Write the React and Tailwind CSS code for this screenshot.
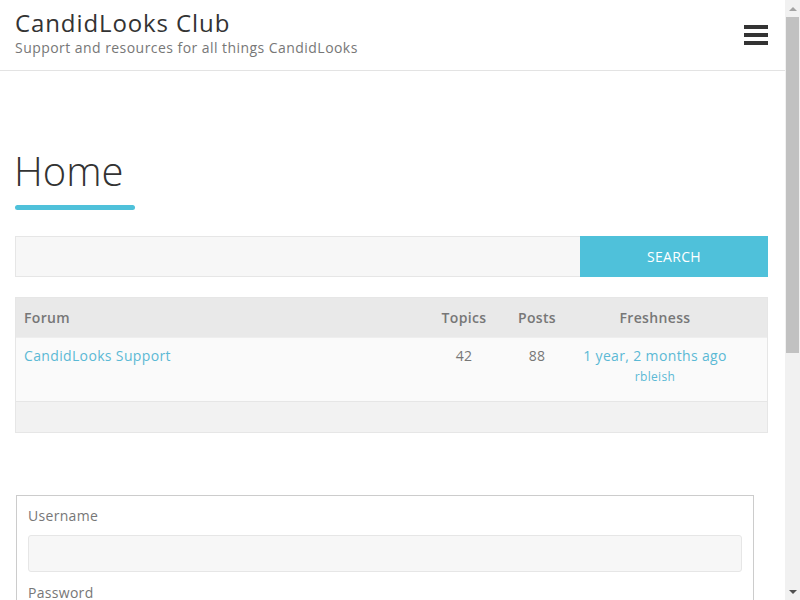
import { useState } from 'react';

const font = { fontFamily: '"Open Sans", "Liberation Sans", sans-serif' };

function Header() {
  return (
    <header className="flex items-start justify-between border-b border-[#e3e3e3] h-[71px] pl-[15px] pr-[17px]">
      <div className="pt-[7px]">
        <h1 className="text-[24px] leading-[32px] text-[#333] tracking-[0.9px]">CandidLooks Club</h1>
        <p className="text-[14px] leading-[20px] text-[#777] mt-[-1px] tracking-[0.45px]">Support and resources for all things CandidLooks</p>
      </div>
      <button className="mt-[25px] flex flex-col gap-[4px] w-[24px]" aria-label="Menu">
        <span className="block h-[4px] w-full bg-[#333]" />
        <span className="block h-[4px] w-full bg-[#333]" />
        <span className="block h-[4px] w-full bg-[#333]" />
      </button>
    </header>
  );
}

function ForumTable() {
  return (
    <div className="border border-[#e6e6e6] text-[14px] tracking-[0.35px]">
      {/* head */}
      <div className="flex items-center h-[39px] bg-[#e9e9e9] text-[#777] font-semibold">
        <div className="flex-1 pl-[8px]">Forum</div>
        <div className="w-[74px] text-center">Topics</div>
        <div className="w-[72px] text-center">Posts</div>
        <div className="w-[164px] text-center">Freshness</div>
        <div className="w-[30px]" />
      </div>
      {/* row */}
      <div className="flex items-start h-[64px] bg-[#fafafa] border-t border-[#eee] pt-[7px]">
        <div className="flex-1 pl-[8px]">
          <a href="#" className="text-[#5ab9d5]">CandidLooks Support</a>
        </div>
        <div className="w-[74px] text-center text-[#777]">42</div>
        <div className="w-[72px] text-center text-[#777]">88</div>
        <div className="w-[164px] text-center">
          <a href="#" className="block text-[#5ab9d5]">1 year, 2 months ago</a>
          <a href="#" className="block text-[12px] leading-[18px] mt-[2px] text-[#5ab9d5]">rbleish</a>
        </div>
        <div className="w-[30px]" />
      </div>
      {/* foot */}
      <div className="h-[31px] bg-[#f2f2f2] border-t border-[#e6e6e6]" />
    </div>
  );
}

function LoginBox() {
  const [remember, setRemember] = useState(false);
  return (
    <form className="ml-[1px] mr-[14px] border border-[#ccc] px-[11px] pt-[12px] pb-[20px] text-[14px] text-[#777] tracking-[0.3px]">
      <label className="block leading-[16px]">Username</label>
      <input className="block w-full h-[37px] mt-[11px] bg-[#f7f7f7] border border-[#e6e6e6] rounded-[3px]" />
      <label className="block leading-[16px] mt-[13px]">Password</label>
      <input type="password" className="block w-full h-[37px] mt-[11px] bg-[#f7f7f7] border border-[#e6e6e6] rounded-[3px]" />
      <label className="flex items-center gap-[8px] mt-[14px]">
        <input type="checkbox" checked={remember} onChange={() => setRemember(!remember)} />
        Keep me signed in
      </label>
      <button type="button" className="mt-[14px] h-[40px] px-[24px] bg-[#4fc1da] text-white uppercase">Log In</button>
    </form>
  );
}

// browser scrollbar as it shows in the screenshot
function Scrollbar() {
  return (
    <div className="w-[15px] shrink-0 h-full flex flex-col bg-[#f1f1f1]">
      <div className="h-[17px] flex items-center justify-center">
        <div className="w-0 h-0 border-x-[4px] border-x-transparent border-b-[4px] border-b-[#a3a3a3]" />
      </div>
      <div className="h-[336px] mx-[1px] bg-[#c1c1c1]" />
      <div className="flex-1" />
      <div className="h-[17px] flex items-center justify-center">
        <div className="w-0 h-0 border-x-[4px] border-x-transparent border-t-[4px] border-t-[#505050]" />
      </div>
    </div>
  );
}

export default function App() {
  return (
    <div className="h-screen flex overflow-hidden bg-white" style={font}>
      <div className="flex-1 min-w-0 overflow-y-auto">
        <div className="min-h-[1010px]">
          <Header />
          <main className="pl-[15px] pr-[17px] pt-[80px] pb-[80px]">
            <h2 className="text-[40px] leading-[40px] font-light text-[#333] ml-[-1px]">Home</h2>
            <div className="mt-[14px] h-[5px] w-[120px] rounded-full bg-[#4fc1da]" />

            <form className="flex mt-[26px]">
              <input className="flex-1 h-[41px] bg-[#f7f7f7] border border-[#e6e6e6] border-r-0" />
              <button type="button" className="w-[188px] h-[41px] bg-[#4fc1da] text-white text-[14px] uppercase tracking-[0.3px]">Search</button>
            </form>

            <div className="mt-[20px]">
              <ForumTable />
            </div>

            <div className="mt-[62px]">
              <LoginBox />
            </div>
          </main>
        </div>
      </div>
      <Scrollbar />
    </div>
  );
}
